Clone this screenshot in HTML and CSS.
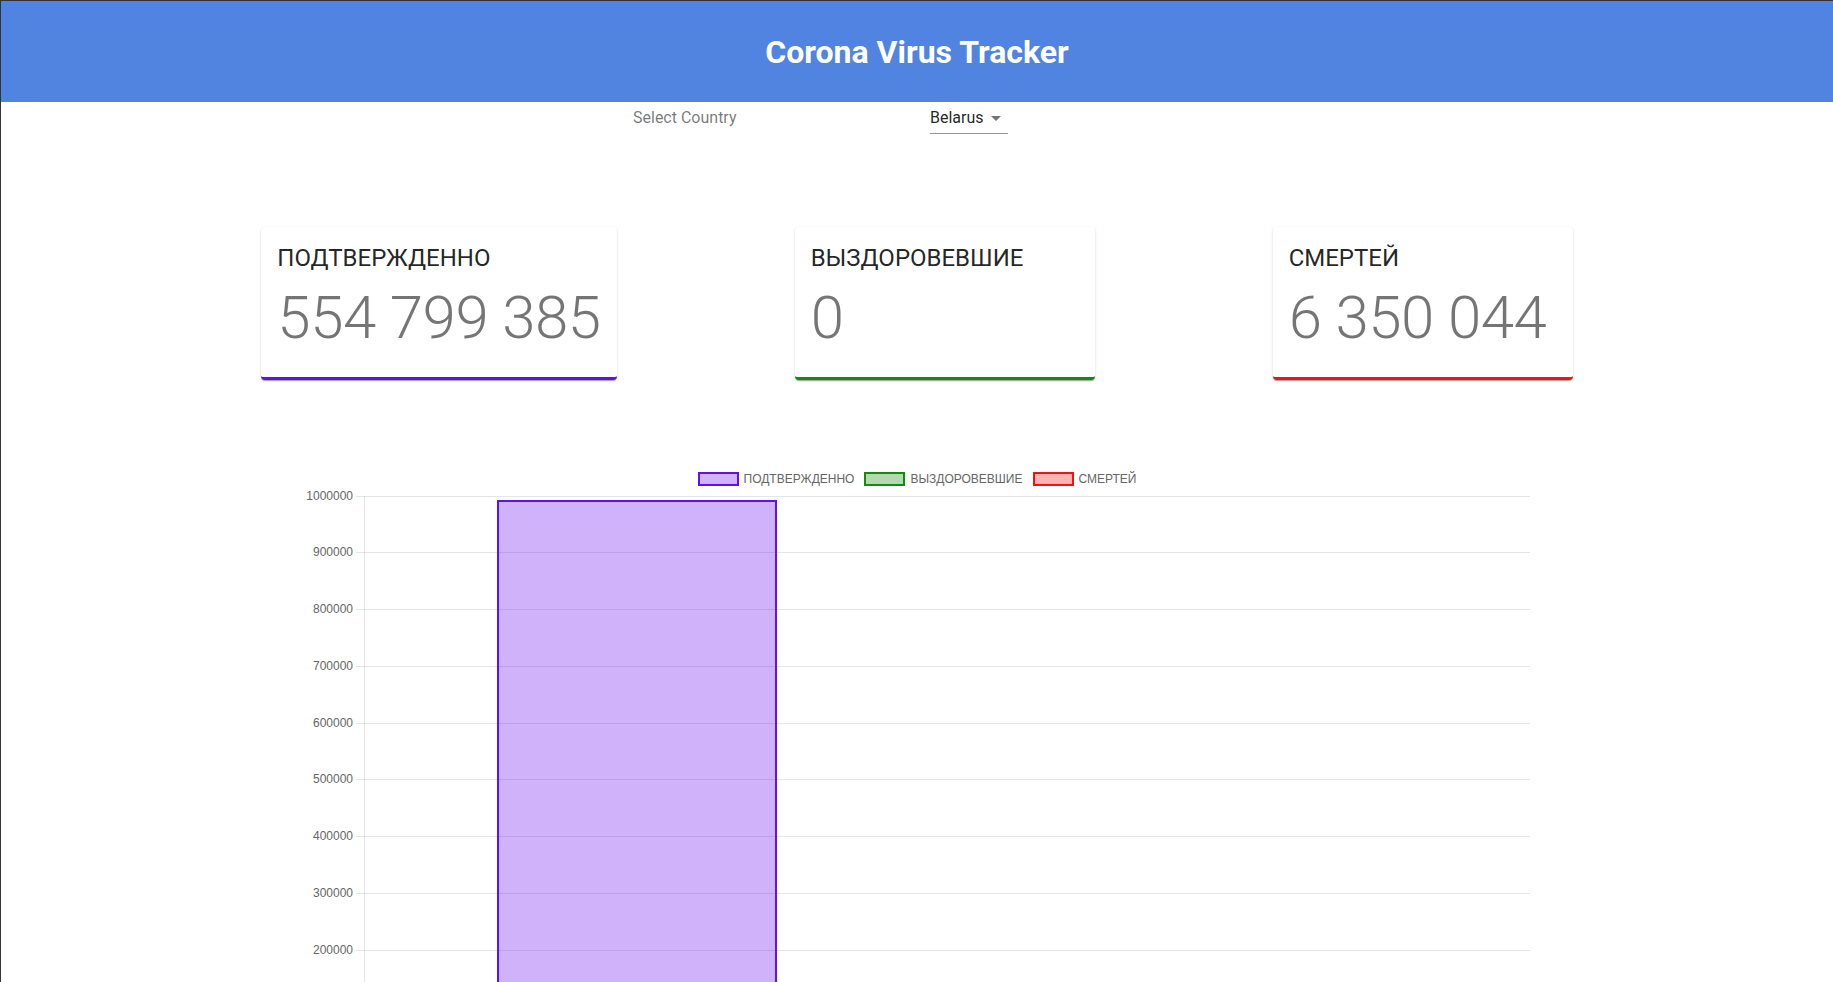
FILE: index.html
```html
<!DOCTYPE html>
<html lang="ru">
<head>
<meta charset="utf-8">
<title>Corona Virus Tracker</title>
<link rel="stylesheet" href="styles.css">
</head>
<body>
<header class="app-bar">
  <h1 class="app-title">Corona Virus Tracker</h1>
</header>
<main class="page">
  <div class="country-row">
    <span class="country-label">Select Country</span>
    <div class="select">
      <span class="select-value">Belarus</span>
      <svg class="select-icon" viewBox="0 0 24 24" aria-hidden="true"><path d="M7 10l5 5 5-5z"/></svg>
    </div>
  </div>

  <section class="cards">
    <div class="card card-confirmed">
      <h2 class="card-title">ПОДТВЕРЖДЕННО</h2>
      <p class="card-value">554 799 385</p>
    </div>
    <div class="card card-recovered">
      <h2 class="card-title">ВЫЗДОРОВЕВШИЕ</h2>
      <p class="card-value">0</p>
    </div>
    <div class="card card-deaths">
      <h2 class="card-title">СМЕРТЕЙ</h2>
      <p class="card-value">6 350 044</p>
    </div>
  </section>

  <section class="chart">
    <div class="legend">
      <div class="legend-item"><span class="legend-box box-confirmed"></span><span class="legend-text">ПОДТВЕРЖДЕННО</span></div>
      <div class="legend-item"><span class="legend-box box-recovered"></span><span class="legend-text">ВЫЗДОРОВЕВШИЕ</span></div>
      <div class="legend-item"><span class="legend-box box-deaths"></span><span class="legend-text">СМЕРТЕЙ</span></div>
    </div>
    <svg class="plot" width="1250" height="495" viewBox="0 0 1250 495">
      <g class="grid">
        <line x1="64" y1="9.5" x2="1238" y2="9.5"/>
        <line x1="64" y1="65.5" x2="1238" y2="65.5"/>
        <line x1="64" y1="122.5" x2="1238" y2="122.5"/>
        <line x1="64" y1="179.5" x2="1238" y2="179.5"/>
        <line x1="64" y1="236.5" x2="1238" y2="236.5"/>
        <line x1="64" y1="292.5" x2="1238" y2="292.5"/>
        <line x1="64" y1="349.5" x2="1238" y2="349.5"/>
        <line x1="64" y1="406.5" x2="1238" y2="406.5"/>
        <line x1="64" y1="463.5" x2="1238" y2="463.5"/>
        <line x1="72.5" y1="9" x2="72.5" y2="495"/>
      </g>
      <g class="ticks">
        <text x="61" y="13">1000000</text>
        <text x="61" y="69">900000</text>
        <text x="61" y="126">800000</text>
        <text x="61" y="183">700000</text>
        <text x="61" y="240">600000</text>
        <text x="61" y="296">500000</text>
        <text x="61" y="353">400000</text>
        <text x="61" y="410">300000</text>
        <text x="61" y="467">200000</text>
      </g>
      <rect class="bar-confirmed" x="206" y="14" width="278" height="490"/>
    </svg>
  </section>
</main>
</body>
</html>
```

FILE: styles.css
```css
html {
  overflow: hidden;
}

body {
  margin: 0;
  border-top: 1px solid #343434;
  border-left: 1px solid #343434;
  background: #ffffff;
  font-family: Roboto, "Liberation Sans", Arial, sans-serif;
}

.app-bar {
  height: 101px;
  background: #5084e0;
  display: flex;
  align-items: center;
  justify-content: center;
}

.app-title {
  margin: 0;
  color: #ffffff;
  font-family: Roboto, "Liberation Sans", Arial, sans-serif;
  font-weight: 700;
  font-size: 32px;
  line-height: 40px;
}

.country-row {
  display: flex;
  align-items: flex-start;
  padding-left: 632px;
}

.country-label {
  flex: 0 0 297px;
  font-size: 16px;
  line-height: 19px;
  padding: 6px 0 7px;
  color: rgba(0, 0, 0, 0.54);
}

.select {
  position: relative;
  padding: 6px 24px 6px 0;
  border-bottom: 1px solid rgba(0, 0, 0, 0.42);
  font-size: 16px;
  line-height: 19px;
  color: rgba(0, 0, 0, 0.87);
}

.select-icon {
  position: absolute;
  right: 0;
  top: calc(50% - 12px);
  width: 24px;
  height: 24px;
  fill: rgba(0, 0, 0, 0.54);
}

.cards {
  margin-top: 93px;
  display: flex;
  justify-content: center;
  align-items: flex-start;
  gap: 178px;
}

.card {
  box-sizing: border-box;
  min-width: 300px;
  padding: 15px 16px 23px;
  background: #ffffff;
  border-radius: 4px;
  box-shadow: 0 2px 1px -1px rgba(0, 0, 0, 0.2), 0 1px 1px 0 rgba(0, 0, 0, 0.14), 0 1px 3px 0 rgba(0, 0, 0, 0.12);
  border-bottom: 3px solid transparent;
}

.card-confirmed { border-bottom-color: #6010e8; }
.card-recovered { border-bottom-color: #108c10; }
.card-deaths { border-bottom-color: #ee1414; }

.card-title {
  margin: 0 0 8px;
  font-weight: 400;
  font-size: 24px;
  line-height: 32px;
  color: rgba(0, 0, 0, 0.87);
  white-space: nowrap;
}

.card-value {
  margin: 0;
  font-weight: 300;
  font-size: 60px;
  line-height: 72px;
  letter-spacing: -0.5px;
  color: rgba(0, 0, 0, 0.54);
  white-space: nowrap;
}

.chart {
  margin-top: 92px;
}

.legend {
  display: flex;
  justify-content: center;
  align-items: center;
  gap: 10px;
  height: 14px;
  padding-bottom: 1px;
  font-family: "Liberation Sans", Arial, sans-serif;
  font-size: 12px;
  color: #666666;
}

.legend-item {
  display: flex;
  align-items: center;
  gap: 5px;
}

.legend-box {
  box-sizing: border-box;
  width: 41px;
  height: 14px;
  border: 2px solid;
}

.legend-text {
  line-height: 14px;
}

.box-confirmed { background: #cfb3fd; border-color: #6010e8; }
.box-recovered { background: #b3d9b3; border-color: #108c10; }
.box-deaths { background: #ffb3b3; border-color: #ee1414; }

.plot {
  display: block;
  margin: 0 auto;
}

.grid line {
  stroke: rgba(0, 0, 0, 0.1);
  stroke-width: 1;
}

.ticks text {
  font-family: "Liberation Sans", Arial, sans-serif;
  font-size: 12px;
  fill: #666666;
  text-anchor: end;
}

.bar-confirmed {
  fill: rgba(96, 0, 240, 0.3);
  stroke: #6010e8;
  stroke-width: 2;
}
```
